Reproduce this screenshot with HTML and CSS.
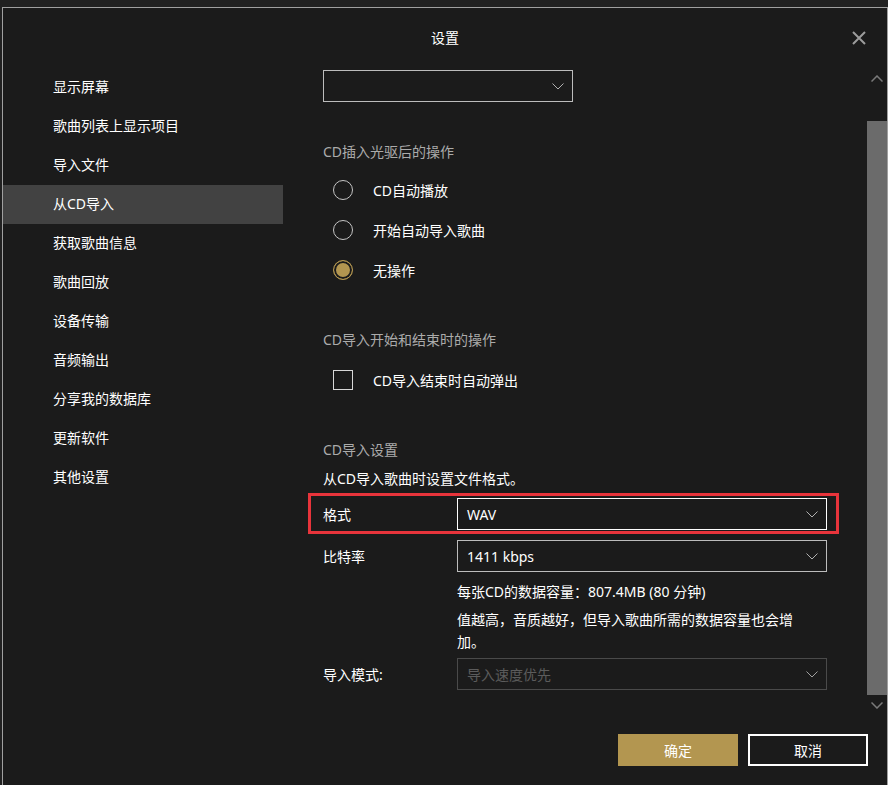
FILE: index.html
```html
<!DOCTYPE html>
<html lang="zh-CN">
<head>
  <meta charset="UTF-8" />
  <title>设置</title>
  <link rel="stylesheet" href="styles.css">
</head>
<body>
  <div class="dialog">
    <header class="dialog-header">
      <span></span>
      <h1>设置</h1>
      <button class="close" aria-label="关闭">
        <svg width="14" height="14" viewBox="0 0 14 14"><path d="M1 1L13 13M13 1L1 13" stroke="#9c9c9c" stroke-width="2" fill="none"/></svg>
      </button>
    </header>

    <div class="dialog-body">
      <aside class="sidebar">
        <ul>
          <li>显示屏幕</li>
          <li>歌曲列表上显示项目</li>
          <li>导入文件</li>
          <li class="active">从CD导入</li>
          <li>获取歌曲信息</li>
          <li>歌曲回放</li>
          <li>设备传输</li>
          <li>音频输出</li>
          <li>分享我的数据库</li>
          <li>更新软件</li>
          <li>其他设置</li>
        </ul>
      </aside>

      <main class="content">
        <div class="select select-top">
          <span></span>
          <svg class="chevron" width="12" height="7" viewBox="0 0 12 7"><path d="M0.5 0.5L6 6L11.5 0.5" stroke="#b0b0b0" fill="none"/></svg>
        </div>

        <h2 class="group-title first">CD插入光驱后的操作</h2>
        <div class="option"><span class="radio"></span>CD自动播放</div>
        <div class="option"><span class="radio"></span>开始自动导入歌曲</div>
        <div class="option"><span class="radio checked"></span>无操作</div>

        <h2 class="group-title">CD导入开始和结束时的操作</h2>
        <div class="option option-check"><span class="checkbox"></span>CD导入结束时自动弹出</div>

        <h2 class="group-title">CD导入设置</h2>
        <p class="desc">从CD导入歌曲时设置文件格式。</p>

        <div class="field highlight">
          <label>格式</label>
          <div class="select select-active">
            <span>WAV</span>
            <svg class="chevron" width="12" height="7" viewBox="0 0 12 7"><path d="M0.5 0.5L6 6L11.5 0.5" stroke="#b0b0b0" fill="none"/></svg>
          </div>
        </div>

        <div class="field field-bitrate">
          <label>比特率</label>
          <div class="select">
            <span>1411 kbps</span>
            <svg class="chevron" width="12" height="7" viewBox="0 0 12 7"><path d="M0.5 0.5L6 6L11.5 0.5" stroke="#b0b0b0" fill="none"/></svg>
          </div>
        </div>

        <p class="info">每张CD的数据容量：807.4MB (80 分钟)</p>
        <p class="note">值越高，音质越好，但导入歌曲所需的数据容量也会增<br>加。</p>

        <div class="field field-mode">
          <label>导入模式:</label>
          <div class="select select-disabled">
            <span>导入速度优先</span>
            <svg class="chevron" width="12" height="7" viewBox="0 0 12 7"><path d="M0.5 0.5L6 6L11.5 0.5" stroke="#a0a0a0" fill="none"/></svg>
          </div>
        </div>
      </main>

      <div class="scrollbar">
        <div class="scroll-arrow">
          <svg width="12" height="7" viewBox="0 0 12 7"><path d="M0.5 6.5L6 1L11.5 6.5" stroke="#7a7a7a" stroke-width="1.5" fill="none"/></svg>
        </div>
        <div class="scroll-track"><div class="scroll-thumb"></div></div>
        <div class="scroll-arrow">
          <svg width="12" height="7" viewBox="0 0 12 7"><path d="M0.5 0.5L6 6L11.5 0.5" stroke="#7a7a7a" stroke-width="1.5" fill="none"/></svg>
        </div>
      </div>
    </div>

    <footer class="dialog-footer">
      <button class="btn btn-primary">确定</button>
      <button class="btn btn-outline">取消</button>
    </footer>
  </div>
</body>
</html>
```

FILE: styles.css
```css
* {
  box-sizing: border-box;
}

body {
  margin: 0;
  height: 785px;
  overflow: hidden;
  background: #212121;
  font-family: "Segoe UI", "Noto Sans", "Noto Sans CJK SC", sans-serif;
  font-size: 14px;
  color: #fff;
}

.dialog {
  margin: 7px 0 0 2px;
  width: 886px;
  height: 800px;
  background: #1b1b1b;
  border: 1px solid #a0a0a0;
  border-bottom: none;
  display: flex;
  flex-direction: column;
}

.dialog-header {
  height: 60px;
  display: grid;
  grid-template-columns: 1fr auto 1fr;
  align-items: center;
}

.dialog-header h1 {
  margin: 0;
  font-size: 14px;
  font-weight: normal;
  line-height: 20px;
}

.close {
  justify-self: end;
  margin-right: 21px;
  width: 14px;
  height: 14px;
  padding: 0;
  border: none;
  background: none;
  display: flex;
}

.dialog-body {
  display: flex;
  height: 647px;
}

.sidebar {
  width: 280px;
  flex-shrink: 0;
}

.sidebar ul {
  list-style: none;
  margin: 0;
  padding: 0;
}

.sidebar li {
  height: 39px;
  line-height: 38px;
  padding-left: 50px;
  white-space: nowrap;
}

.sidebar li.active {
  background: #424242;
}

.content {
  flex: 1;
  padding: 2px 40px 0 40px;
  overflow: hidden;
}

.select {
  height: 32px;
  border: 1px solid #bdbdbd;
  display: flex;
  align-items: center;
  justify-content: space-between;
  padding: 0 8px 0 9px;
  flex: 1;
}

.select-top {
  width: 250px;
  flex: none;
}

.select-active {
  border-color: #fff;
}

.select-disabled {
  border-color: #4a4a4a;
  color: #5c5c5c;
}

.group-title {
  margin: 40px 0 0;
  font-size: 14px;
  font-weight: normal;
  line-height: 20px;
  color: #ababab;
}

.option {
  height: 40px;
  display: flex;
  align-items: center;
  gap: 20px;
  padding-left: 10px;
}

.group-title + .option {
  margin-top: 8px;
}

.group-title + .option-check {
  margin-top: 10px;
}

.radio {
  width: 20px;
  height: 20px;
  border: 1.5px solid #c4c4c4;
  border-radius: 50%;
}

.radio.checked {
  border-color: #b39650;
  background: #b39650;
  box-shadow: inset 0 0 0 2px #1b1b1b;
}

.checkbox {
  width: 20px;
  height: 20px;
  border: 1.5px solid #d8d8d8;
}

.desc {
  margin: 9px 0 0;
  line-height: 20px;
}

.field {
  display: flex;
  align-items: center;
}

.field label {
  width: 134px;
  flex-shrink: 0;
}

.highlight {
  margin: 4px -12px 0 -15px;
  padding: 2px 9px 1px 12px;
  border: 3px solid #e8343b;
}

.field-bitrate {
  margin-top: 6px;
}

.info {
  margin: 10px 0 0 134px;
  line-height: 20px;
}

.note {
  margin: 7px 0 0 134px;
  line-height: 22px;
}

.field-mode {
  margin-top: 5px;
}

.scrollbar {
  width: 20px;
  flex-shrink: 0;
  display: flex;
  flex-direction: column;
}

.scroll-arrow {
  height: 20px;
  display: flex;
  align-items: center;
  justify-content: center;
}

.scroll-track {
  flex: 1;
  padding-top: 33px;
  display: flex;
}

.scroll-thumb {
  flex: 1;
  background: #6b6b6b;
}

.dialog-footer {
  display: flex;
  justify-content: flex-end;
  gap: 10px;
  padding: 19px 19px 0 0;
}

.btn {
  width: 120px;
  height: 32px;
  font-family: inherit;
  font-size: 14px;
  color: #fff;
  background: none;
}

.btn-primary {
  background: #b39650;
  border: none;
}

.btn-outline {
  border: 2px solid #fff;
}
```
